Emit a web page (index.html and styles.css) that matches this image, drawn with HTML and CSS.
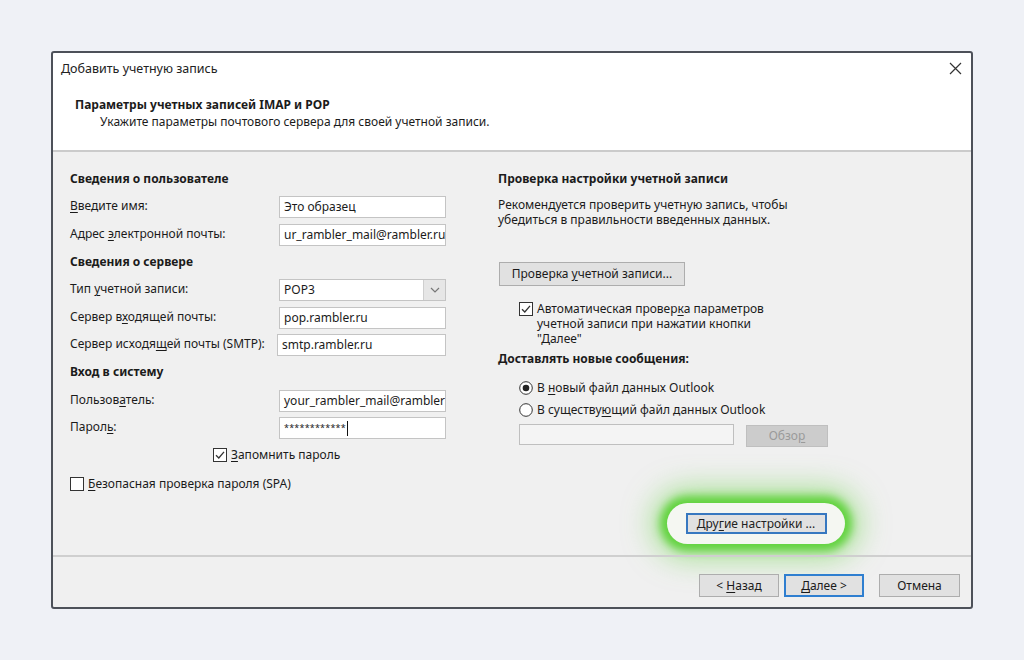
FILE: index.html
```html
<!DOCTYPE html>
<html lang="ru">
<head>
<meta charset="utf-8">
<title>Добавить учетную запись</title>
<link rel="stylesheet" href="styles.css">
</head>
<body>
<div class="dialog">
  <div class="top">
    <div class="titlebar">
      <span class="title">Добавить учетную запись</span>
      <svg class="close" width="13" height="13" viewBox="0 0 13 13"><path d="M1 1L12 12M12 1L1 12" stroke="#333" stroke-width="1.2" fill="none"/></svg>
    </div>
    <div class="hdr">
      <div class="hdr-title">Параметры учетных записей IMAP и POP</div>
      <div class="hdr-sub">Укажите параметры почтового сервера для своей учетной записи.</div>
    </div>
  </div>
  <div class="body">
    <div class="col-left">
      <div class="sec">Сведения о пользователе</div>
      <div class="lbl"><u>В</u>ведите имя:</div>
      <div class="field">Это образец</div>
      <div class="lbl">Адрес <u>э</u>лектронной почты:</div>
      <div class="field">ur_rambler_mail@rambler.ru</div>
      <div class="sec">Сведения о сервере</div>
      <div class="lbl">Тип <u>у</u>четной записи:</div>
      <div class="field select"><span class="sel-val">POP3</span><span class="sel-btn"><svg width="10" height="6" viewBox="0 0 10 6"><path d="M1 1L5 5L9 1" stroke="#777" stroke-width="1.2" fill="none"/></svg></span></div>
      <div class="lbl">Сервер в<u>х</u>одящей почты:</div>
      <div class="field">pop.rambler.ru</div>
      <div class="lbl">Сервер исходя<u>щ</u>ей почты (SMTP):</div>
      <div class="field wide">smtp.rambler.ru</div>
      <div class="sec">Вход в систему</div>
      <div class="lbl">Пользов<u>а</u>тель:</div>
      <div class="field">your_rambler_mail@rambler</div>
      <div class="lbl">Парол<u>ь</u>:</div>
      <div class="field pwd">************<span class="caret"></span></div>
      <div class="chkrow remember">
        <svg class="cb" width="14" height="14" viewBox="0 0 14 14"><rect x="0.5" y="0.5" width="13" height="13" fill="#fff" stroke="#333"/><path d="M3 7.2L5.8 10L11 3.8" stroke="#333" stroke-width="1.3" fill="none"/></svg>
        <span><u>З</u>апомнить пароль</span>
      </div>
      <div class="chkrow spa">
        <svg class="cb" width="14" height="14" viewBox="0 0 14 14"><rect x="0.5" y="0.5" width="13" height="13" fill="#fff" stroke="#333"/></svg>
        <span><u>Б</u>езопасная проверка пароля (SPA)</span>
      </div>
    </div>
    <div class="col-right">
      <div class="sec">Проверка настройки учетной записи</div>
      <p class="desc">Рекомендуется проверить учетную запись, чтобы<br>убедиться в правильности введенных данных.</p>
      <div class="btn test"><span>Проверка <u>у</u>четной записи...</span></div>
      <div class="auto">
        <svg class="cb" width="14" height="14" viewBox="0 0 14 14"><rect x="0.5" y="0.5" width="13" height="13" fill="#fff" stroke="#333"/><path d="M3 7.2L5.8 10L11 3.8" stroke="#333" stroke-width="1.3" fill="none"/></svg>
        <span>Автоматическая провер<u>к</u>а параметров<br>учетной записи при нажатии кнопки<br>"Далее"</span>
      </div>
      <div class="sec2">Доставлять новые сообщения:</div>
      <div class="radio first">
        <svg class="rb" width="14" height="14" viewBox="0 0 14 14"><circle cx="7" cy="7" r="6.3" fill="#fff" stroke="#333"/><circle cx="7" cy="7" r="3.3" fill="#222"/></svg>
        <span>В <u>н</u>овый файл данных Outlook</span>
      </div>
      <div class="radio">
        <svg class="rb" width="14" height="14" viewBox="0 0 14 14"><circle cx="7" cy="7" r="6.3" fill="#fff" stroke="#333"/></svg>
        <span>В существу<u>ю</u>щий файл данных Outlook</span>
      </div>
      <div class="browse-row">
        <div class="field disabled"></div>
        <div class="btn off"><span>Обзо<u>р</u></span></div>
      </div>
      <div class="pill">
        <div class="btn focus"><span>Дру<u>г</u>ие настройки ...</span></div>
      </div>
    </div>
  </div>
  <div class="footer">
    <div class="btn foot"><span>&lt; <u>Н</u>азад</span></div>
    <div class="btn foot primary"><span><u>Д</u>алее &gt;</span></div>
    <div class="btn foot cancel"><span>Отмена</span></div>
  </div>
</div>
</body>
</html>
```

FILE: styles.css
```css
* { box-sizing: border-box; }
html, body { margin: 0; padding: 0; }
body {
  width: 1024px;
  height: 660px;
  background: #eff1f6;
  font-family: "Noto Sans", "Open Sans", sans-serif;
  font-size: 12px;
  color: #1b1b1b;
  overflow: hidden;
}
u { text-decoration: underline; text-underline-offset: 2px; }

.dialog {
  margin: 51px 0 0 51px;
  width: 922px;
  height: 558px;
  border: 2px solid #4d5159;
  border-radius: 3px;
  background: #f0f0f0;
  display: flex;
  flex-direction: column;
}

.top {
  height: 99px;
  background: #fff;
  border-bottom: 2px solid #cbcbcb;
  border-radius: 2px 2px 0 0;
}
.titlebar {
  height: 30px;
  display: flex;
  align-items: center;
  justify-content: space-between;
  padding: 0 9px 0 8px;
}
.title { font-size: 12.5px; color: #222; }
.hdr { padding-top: 13px; }
.hdr-title { font-weight: bold; line-height: 17px; padding-left: 22px; }
.hdr-sub { line-height: 17px; padding-left: 47px; }

.body {
  height: 403px;
  display: flex;
  padding: 13px 0 0 17px;
  gap: 52px;
}

.col-left {
  width: 376px;
  display: grid;
  grid-template-columns: 209px 167px;
  grid-auto-rows: 27.6px;
  align-items: center;
  align-content: start;
}
.sec { grid-column: 1 / 3; font-weight: bold; line-height: 16px; }
.lbl { line-height: 16px; white-space: nowrap; }
.field {
  height: 22px;
  background: #fff;
  border: 1px solid #c4c4c4;
  padding: 0 4px;
  line-height: 20px;
  white-space: nowrap;
  overflow: hidden;
  margin-top: 2px;
}
.field.wide { margin-left: -2px; }
.select { display: flex; padding-right: 0; }
.sel-val { flex: 1; }
.sel-btn {
  width: 22px;
  height: 20px;
  background: #e6e6e6;
  border-left: 1px solid #cfcfcf;
  display: flex;
  align-items: center;
  justify-content: center;
}
.pwd { font-size: 9px; letter-spacing: 0.2px; display: flex; align-items: center; }
.caret { width: 1px; height: 15px; background: #111; margin-left: 1px; }

.chkrow { grid-column: 1 / 3; display: flex; align-items: center; gap: 4px; line-height: 16px; }
.remember { padding-left: 143px; }
.spa { margin-top: 4px; }
.cb, .rb { flex: none; }

.col-right { width: 420px; display: flex; flex-direction: column; align-items: flex-start; }
.col-right .sec { height: 27.6px; line-height: 27.6px; }
.desc { margin: 4px 0 0; line-height: 15px; }

.btn {
  background: #e1e1e1;
  border: 1px solid #adadad;
  display: flex;
  align-items: center;
  justify-content: center;
  white-space: nowrap;
}
.test { margin: 35px 0 0 1px; width: 186px; height: 24px; }

.auto { margin: 15px 0 0 21px; display: flex; gap: 4px; line-height: 15px; }
.auto .cb { margin-top: 1px; }
.sec2 { font-weight: bold; line-height: 16px; margin-top: 5px; }
.radio { display: flex; align-items: center; gap: 4px; height: 22px; margin-left: 21px; }
.radio.first { margin-top: 10px; }

.browse-row { display: flex; gap: 12px; margin: 3px 0 0 21px; align-items: flex-start; }
.field.disabled { width: 215px; height: 21px; margin: 0; border-color: #bfbfbf; background: #f4f4f4; }
.off { width: 82px; height: 22px; margin-top: 1px; background: #cccccc; border-color: #bfbfbf; color: #9a9a9a; }

.pill {
  margin: 56px 0 0 169px;
  width: 178px;
  height: 41px;
  border-radius: 21px;
  background: #f5f7f2;
  box-shadow: 0 0 8px 7px #62d33f, 0 0 28px 16px rgba(120, 215, 90, 0.55);
  display: flex;
  align-items: center;
  justify-content: center;
}
.focus {
  width: 141px;
  height: 21px;
  border: 2px solid #3778c0;
  color: #222;
}

.footer {
  flex: 1;
  border-top: 2px solid #cfcfcf;
  display: flex;
  justify-content: flex-end;
  align-items: flex-start;
  padding: 17px 11px 0 0;
  gap: 5px;
}
.foot { width: 80px; height: 23px; }
.primary { border: 2px solid #2f7fd0; }
.cancel { width: 81px; margin-left: 10px; }
```
